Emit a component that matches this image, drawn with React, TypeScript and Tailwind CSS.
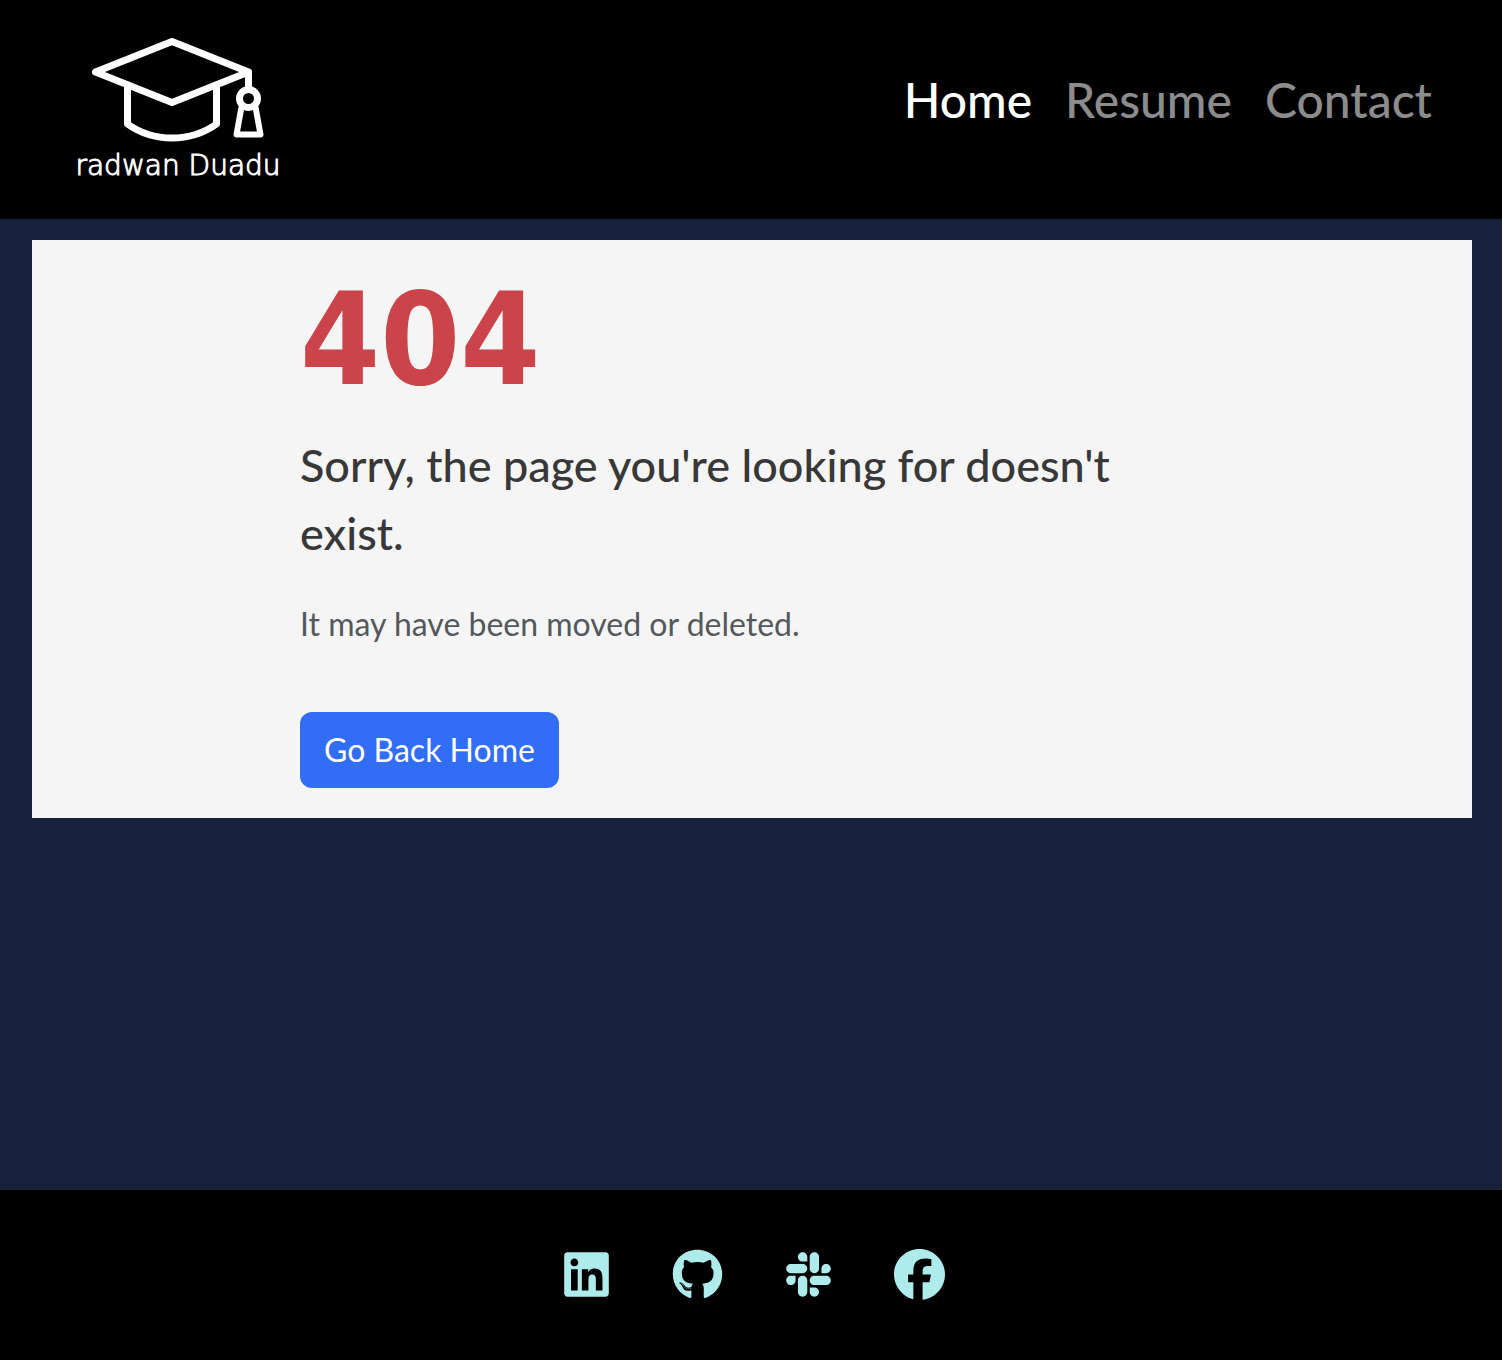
import { FaFacebook, FaGithub, FaLinkedin, FaSlack } from "react-icons/fa6";

const links = [
  { label: "Home", active: true },
  { label: "Resume", active: false },
  { label: "Contact", active: false },
];

const socials = [
  { label: "LinkedIn", Icon: FaLinkedin },
  { label: "GitHub", Icon: FaGithub },
  { label: "Slack", Icon: FaSlack },
  { label: "Facebook", Icon: FaFacebook },
];

function Logo() {
  return (
    <a href="#" className="flex w-[204px] flex-col items-center text-white">
      <svg
        viewBox="88 34 180 112"
        className="h-28 w-[180px]"
        fill="none"
        stroke="currentColor"
        strokeWidth="7"
        strokeLinejoin="round"
        strokeLinecap="round"
        aria-hidden="true"
      >
        <path d="M95.500 72 L172 41.500 L248.500 72 L172 102.500 Z" />
        <path d="M127.500 86 V124 Q147 138 172 138 Q197 138 216.500 124 V86" />
        <path d="M248.500 72 V88" strokeLinecap="butt" />
        <circle cx="248.500" cy="98.500" r="9" />
        <path d="M241.500 107 L236.500 134.500 H260.500 L255.500 107" strokeWidth="6" />
      </svg>
      <span className="whitespace-nowrap font-['DejaVu_Sans'] text-[28px] font-extralight leading-10 [-webkit-text-stroke:1px_white]">
        radwan Duadu
      </span>
    </a>
  );
}

export default function App() {
  return (
    <div className="flex min-h-screen flex-col bg-[#18213b] font-['Lato',sans-serif]">
      <header className="flex items-start justify-between bg-black pt-[34px] pr-[70px] pb-[33px] pl-[76px]">
        <Logo />
        <nav className="flex gap-[33px] pt-[30px] text-5xl font-medium leading-[72px]">
          {links.map(({ label, active }) => (
            <a key={label} href="#" className={active ? "text-white" : "text-[#8c8c8c]"}>
              {label}
            </a>
          ))}
        </nav>
      </header>
      <main className="grow pt-[21px] pr-[30px] pl-8">
        <section className="bg-[#f5f5f5] px-8 pt-8 pb-[30px]">
          <div className="mx-auto max-w-[904px]">
            <h1 className="font-['DejaVu_Sans_Condensed','DejaVu_Sans',sans-serif] text-[128px] font-bold leading-[136px] text-[#cb444a]">
              404
            </h1>
            <h2 className="mt-[23px] text-[45px] font-medium leading-[68px] text-[#383838]">
              Sorry, the page you're looking for doesn't exist.
            </h2>
            <p className="mt-[33px] text-[32px] leading-[48px] text-[#54585c]">It may have been moved or deleted.</p>
            <a
              href="#"
              className="mt-16 inline-flex h-[76px] items-center rounded-xl bg-[#326df5] px-6 text-[32px] text-white"
            >
              Go Back Home
            </a>
          </div>
        </section>
      </main>
      <footer className="flex h-[170px] items-center justify-center gap-[60px] bg-black pb-0.5 pl-[3px] text-[51px] text-[#aeebeb]">
        {socials.map(({ label, Icon }) => (
          <a key={label} href="#" aria-label={label}>
            <Icon />
          </a>
        ))}
      </footer>
    </div>
  );
}
